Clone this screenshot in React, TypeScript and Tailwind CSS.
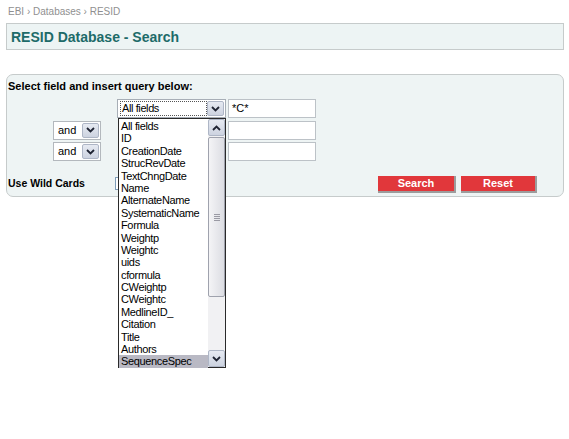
import React from "react";

const fields = [
  "All fields",
  "ID",
  "CreationDate",
  "StrucRevDate",
  "TextChngDate",
  "Name",
  "AlternateName",
  "SystematicName",
  "Formula",
  "Weightp",
  "Weightc",
  "uids",
  "cformula",
  "CWeightp",
  "CWeightc",
  "MedlineID_",
  "Citation",
  "Title",
  "Authors",
  "SequenceSpec",
];

function Chevron({ up = false }: { up?: boolean }) {
  return (
    <svg width="9" height="6" viewBox="0 0 9 6" className="block">
      <path
        d={up ? "M1 5 L4.5 1.5 L8 5" : "M1 1 L4.5 4.5 L8 1"}
        fill="none"
        stroke="#1f2433"
        strokeWidth="1.8"
      />
    </svg>
  );
}

function ArrowButton({ up = false, className = "" }: { up?: boolean; className?: string }) {
  return (
    <div
      className={`flex items-center justify-center rounded-[2px] border border-[#aeb6c6] bg-gradient-to-b from-[#e6eaf2] to-[#cdd3e0] ${className}`}
    >
      <Chevron up={up} />
    </div>
  );
}

function AndSelect() {
  return (
    <div className="ml-[46px] flex h-full w-[48px] items-center border border-[#b3b8bd] bg-white pl-[4px] pr-[1px]">
      <span className="flex-1 text-[11px] text-black">and</span>
      <ArrowButton className="h-[15px] w-[17px]" />
    </div>
  );
}

function TextBox({ value = "" }: { value?: string }) {
  return (
    <div className="ml-[2px] flex h-full w-[88px] items-center border border-[#bcc2c7] bg-white pl-[3px] text-[11px] text-black">
      {value}
    </div>
  );
}

export default function App() {
  return (
    <div className="relative h-[439px] w-[569px] overflow-hidden bg-white font-['Liberation_Sans',Arial,sans-serif]">
      {/* Breadcrumb */}
      <div className="h-[23px] pl-[8px] pt-[6px] text-[10px] leading-[12px] text-[#909090]">
        EBI › Databases › RESID
      </div>

      {/* Title bar */}
      <div className="ml-[6px] mr-[5px] flex h-[27px] items-center border border-[#c6cbcb] bg-[#edf4f4] pl-[4px]">
        <h1 className="text-[14px] font-bold leading-none text-[#1d6b69]">RESID Database - Search</h1>
      </div>

      {/* Search panel */}
      <div className="ml-[6px] mr-[5px] mt-[24px] h-[123px] rounded-[7px] border border-[#c6cbcb] bg-[#eef4f4]">
        <p className="pl-[1px] pt-[5px] text-[11px] font-bold leading-[13px] text-black">
          Select field and insert query below:
        </p>

        <div className="mt-[6px] flex flex-col gap-[2.5px]">
          <div className="flex h-[19px]">
            <div className="w-[110px]" />
            <div className="flex h-full w-[109px] items-center border border-[#a7aeb6] bg-white pl-[2px] pr-[1px]">
              <div className="flex h-[15px] flex-1 items-center border border-dotted border-[#555] pl-[1px] text-[11px] tracking-[-0.4px] text-black">
                All fields
              </div>
              <ArrowButton className="h-[15px] w-[17px]" />
            </div>
            <TextBox value="*C*" />
          </div>
          <div className="flex h-[19px]">
            <div className="flex w-[110px]">
              <AndSelect />
            </div>
            <div className="w-[109px]" />
            <TextBox />
          </div>
          <div className="flex h-[19px]">
            <div className="flex w-[110px]">
              <AndSelect />
            </div>
            <div className="w-[109px]" />
            <TextBox />
          </div>
        </div>

        <div className="mt-[14px] flex h-[17px] items-center">
          <span className="w-[108px] pl-[1px] pt-[1px] text-[10.5px] font-bold text-black">Use Wild Cards</span>
          <div className="h-[13px] w-[13px] border border-[#7f9db9] bg-white" />
          <button className="ml-[250px] mt-[1px] h-[17px] w-[78px] border-b-2 border-r-2 border-[#9c9c9c] bg-[#e1373b] text-[11px] font-bold leading-none text-white">
            Search
          </button>
          <button className="ml-[5px] mt-[1px] h-[17px] w-[76px] border-b-2 border-r-2 border-[#9c9c9c] bg-[#e1373b] text-[11px] font-bold leading-none text-white">
            Reset
          </button>
        </div>
      </div>

      {/* Open dropdown list */}
      <div className="absolute left-[118px] top-[118px] z-10 flex h-[250px] w-[108px] border border-[#2a2a2a] bg-white">
        <ul className="flex-1 pt-[1px]">
          {fields.map((f, i) => (
            <li
              key={f}
              className={`h-[12.4px] pl-[2px] text-[11px] leading-[12.4px] tracking-[-0.35px] text-black ${
                i === fields.length - 1 ? "bg-[#b9b9c4]" : ""
              }`}
            >
              {f}
            </li>
          ))}
        </ul>
        <div className="flex w-[17px] flex-col bg-[#f1f1f3]">
          <ArrowButton up className="h-[17px] w-[17px]" />
          <div className="mt-[1px] flex h-[160px] items-center justify-center rounded-[2px] border border-[#9fa2ad] bg-gradient-to-r from-[#f4f4f6] to-[#dcdde3]">
            <div className="flex flex-col gap-[1px]">
              <div className="h-px w-[6px] bg-[#9a9aa4]" />
              <div className="h-px w-[6px] bg-[#9a9aa4]" />
              <div className="h-px w-[6px] bg-[#9a9aa4]" />
              <div className="h-px w-[6px] bg-[#9a9aa4]" />
            </div>
          </div>
          <div className="flex-1" />
          <ArrowButton className="h-[17px] w-[17px]" />
        </div>
      </div>
    </div>
  );
}
